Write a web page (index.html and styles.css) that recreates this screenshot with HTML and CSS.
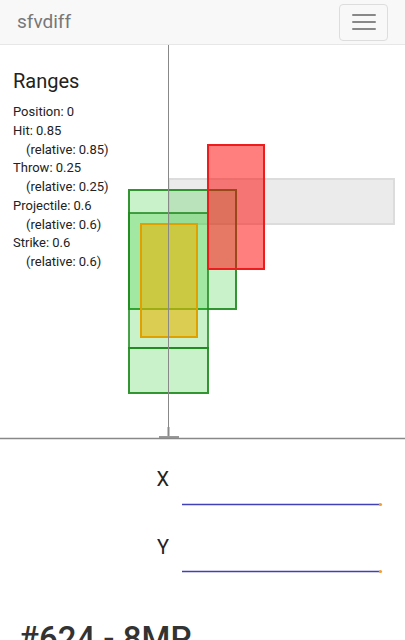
FILE: index.html
```html
<!DOCTYPE html>
<html lang="en">
<head>
    <meta charset="UTF-8">
    <meta name="viewport" content="width=device-width, initial-scale=1.0">
    <title>sfvdiff</title>
    <link rel="stylesheet" href="styles.css">
</head>
<body>
    <nav class="navbar">
        <a class="brand" href="#">sfvdiff</a>
        <button class="toggle" type="button" aria-label="Menu">
            <span class="icon-bar"></span>
            <span class="icon-bar"></span>
            <span class="icon-bar"></span>
        </button>
    </nav>

    <div class="stage">
        <svg class="boxes" width="405" height="395" viewBox="0 0 405 395">
            <!-- throw range -->
            <rect x="169" y="134" width="225" height="45" fill="#e6e6e6" fill-opacity="0.8" stroke="#dcdcdc" stroke-width="2"/>
            <!-- hurtboxes -->
            <rect x="129" y="145" width="107" height="119" fill="#32cd32" fill-opacity="0.26" stroke="#1f8a1f" stroke-opacity="0.9" stroke-width="2"/>
            <rect x="129" y="168" width="79" height="135" fill="#32cd32" fill-opacity="0.26" stroke="#1f8a1f" stroke-opacity="0.8" stroke-width="2"/>
            <rect x="129" y="303" width="79" height="45" fill="#32cd32" fill-opacity="0.26" stroke="#1f8a1f" stroke-opacity="0.9" stroke-width="2"/>
            <!-- pushbox -->
            <rect x="141" y="179" width="56" height="113" fill="#e6b400" fill-opacity="0.6" stroke="#e0a000" stroke-width="2"/>
            <!-- hitbox -->
            <rect x="208" y="100" width="56" height="124" fill="#ff0000" fill-opacity="0.5" stroke="#ee1c1c" stroke-width="2"/>
            <!-- axes -->
            <line x1="168.5" y1="0" x2="168.5" y2="393" stroke="#888" stroke-width="1"/>
            <line x1="168.5" y1="382" x2="168.5" y2="393" stroke="#888" stroke-width="2"/>
            <line x1="159" y1="392" x2="179" y2="392" stroke="#999" stroke-width="2"/>
            <line x1="0" y1="393.5" x2="405" y2="393.5" stroke="#888" stroke-width="1.5"/>
        </svg>

        <div class="ranges">
            <h2>Ranges</h2>
            <div class="range-line">Position: 0</div>
            <div class="range-line">Hit: 0.85</div>
            <div class="range-line rel">(relative: 0.85)</div>
            <div class="range-line">Throw: 0.25</div>
            <div class="range-line rel">(relative: 0.25)</div>
            <div class="range-line">Projectile: 0.6</div>
            <div class="range-line rel">(relative: 0.6)</div>
            <div class="range-line">Strike: 0.6</div>
            <div class="range-line rel">(relative: 0.6)</div>
        </div>
    </div>

    <div class="axes">
        <div class="axis-row">
            <div class="axis-label">X</div>
            <svg class="axis-chart" width="236" height="68" viewBox="0 0 236 68">
                <line x1="13" y1="35.5" x2="211" y2="35.5" stroke="#4040b8" stroke-width="1.5"/>
                <circle cx="211.5" cy="35.5" r="1.6" fill="#f0a030"/>
            </svg>
        </div>
        <div class="axis-row">
            <div class="axis-label">Y</div>
            <svg class="axis-chart" width="236" height="68" viewBox="0 0 236 68">
                <line x1="13" y1="34.5" x2="211" y2="34.5" stroke="#4040b8" stroke-width="1.5"/>
                <circle cx="211.5" cy="34.5" r="1.6" fill="#f0a030"/>
            </svg>
        </div>
    </div>

    <h1 class="move-title">#624 - 8MP</h1>
</body>
</html>
```
FILE: styles.css
```css
body {
    font-family: Roboto, "Liberation Sans", Arial, sans-serif;
    color: #333;
    background-color: #fff;
    margin: 0;
    padding: 0;
    overflow: hidden;
}

.navbar {
    display: flex;
    align-items: center;
    justify-content: space-between;
    height: 44px;
    padding: 0 17px;
    background-color: #f8f8f8;
    border-bottom: 1px solid #e7e7e7;
}

.brand {
    font-size: 19px;
    line-height: 20px;
    color: #777;
    text-decoration: none;
}

.toggle {
    display: flex;
    flex-direction: column;
    align-items: center;
    justify-content: center;
    gap: 5px;
    width: 49px;
    height: 37px;
    padding: 0;
    background: transparent;
    border: 1px solid #ddd;
    border-radius: 4px;
}

.icon-bar {
    display: block;
    width: 24px;
    height: 2px;
    border-radius: 1px;
    background-color: #888;
}

.stage {
    position: relative;
    height: 395px;
}

.boxes {
    display: block;
}

.ranges {
    position: absolute;
    left: 13px;
    top: 25px;
    color: #222;
}

.ranges h2 {
    font-size: 20px;
    font-weight: 400;
    line-height: 22px;
    margin: 0 0 11px;
    color: #222;
}

.range-line {
    font-size: 13px;
    line-height: 18.75px;
    white-space: nowrap;
}

.range-line.rel {
    padding-left: 13px;
}

.axes {
    padding-top: 29px;
}

.axis-row {
    display: grid;
    grid-template-columns: 169px 236px;
    height: 68px;
}

.axis-label {
    text-align: right;
    font-size: 20px;
    line-height: 20px;
    color: #222;
}

.axis-chart {
    display: block;
}

.move-title {
    font-size: 33px;
    font-weight: 500;
    line-height: 1.1;
    margin: 16px 0 0;
    padding: 0 19px;
    color: #333;
}
```
